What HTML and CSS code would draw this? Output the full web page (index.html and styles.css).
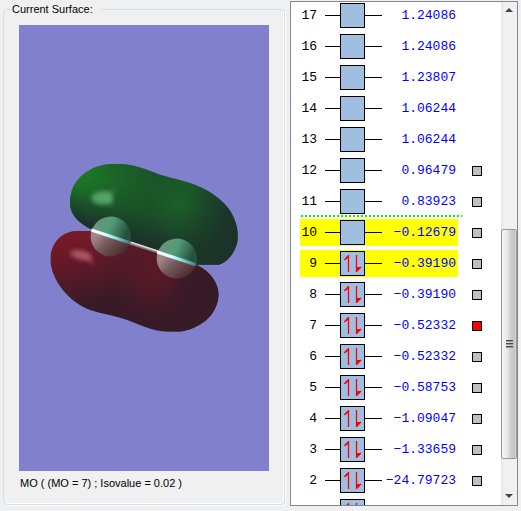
FILE: index.html
```html
<!DOCTYPE html>
<html lang="en">
<head>
<meta charset="utf-8">
<title>Molecular orbitals</title>
<link rel="stylesheet" href="styles.css">
</head>
<body>
<fieldset class="surface">
  <legend>Current Surface:</legend>
  <div class="canvas">
    <svg viewBox="19 25 250 446" role="img" aria-label="Orbital surface">
      <defs>
        <radialGradient id="green" gradientUnits="userSpaceOnUse" cx="115" cy="95" r="230">
          <stop offset="0" stop-color="#1a8026"/><stop offset=".5" stop-color="#1b6428"/><stop offset="1" stop-color="#1b5328"/>
        </radialGradient>
        <radialGradient id="greenMid" gradientUnits="userSpaceOnUse" cx="410" cy="165" r="130">
          <stop offset="0" stop-color="#1b6427" stop-opacity=".8"/><stop offset="1" stop-color="#1b5a28" stop-opacity="0"/>
        </radialGradient>
        <linearGradient id="greenShade" gradientUnits="userSpaceOnUse" x1="355" y1="140" x2="312" y2="275">
          <stop offset="0" stop-color="#1b3529" stop-opacity="0"/><stop offset=".4" stop-color="#1b3c29" stop-opacity=".25"/><stop offset="1" stop-color="#1b3229"/>
        </linearGradient>
        <linearGradient id="greenEdge" gradientUnits="userSpaceOnUse" x1="430" y1="180" x2="560" y2="225">
          <stop offset="0" stop-color="#1b3529" stop-opacity="0"/><stop offset="1" stop-color="#1b3329"/>
        </linearGradient>
        <linearGradient id="red" gradientUnits="userSpaceOnUse" x1="90" y1="250" x2="150" y2="470">
          <stop offset="0" stop-color="#7b1928"/><stop offset=".5" stop-color="#5a1927"/><stop offset="1" stop-color="#361a27"/>
        </linearGradient>
        <radialGradient id="redMid" gradientUnits="userSpaceOnUse" cx="345" cy="375" r="160">
          <stop offset="0" stop-color="#5c1827" stop-opacity=".9"/><stop offset=".4" stop-color="#541927" stop-opacity=".7"/><stop offset="1" stop-color="#421a27" stop-opacity="0"/>
        </radialGradient>
        <linearGradient id="redEdge" gradientUnits="userSpaceOnUse" x1="390" y1="390" x2="490" y2="430">
          <stop offset="0" stop-color="#361a27" stop-opacity="0"/><stop offset="1" stop-color="#361a27"/>
        </linearGradient>
        <linearGradient id="sphereTop" x1="0" y1="0" x2="1" y2=".3">
          <stop offset="0" stop-color="#779080"/><stop offset=".55" stop-color="#509c78"/><stop offset="1" stop-color="#24513b"/>
        </linearGradient>
        <linearGradient id="sphereLow" x1=".1" y1=".3" x2=".85" y2=".85">
          <stop offset="0" stop-color="#a08587"/><stop offset=".4" stop-color="#75585b"/><stop offset="1" stop-color="#4b2a2c"/>
        </linearGradient>
        <linearGradient id="bond" gradientUnits="userSpaceOnUse" x1="0" y1="0" x2="122" y2="0">
          <stop offset="0" stop-color="#fff"/><stop offset=".35" stop-color="#e0ffff"/><stop offset=".55" stop-color="#9eeeee"/><stop offset="1" stop-color="#447777"/>
        </linearGradient>
        <filter id="soft" x="-40%" y="-40%" width="180%" height="180%"><feGaussianBlur stdDeviation="7"/></filter>
        <path id="greenLobe" d="M90 160C90 105 120 72 165 52C190 42 210 41 235 41C270 41 310 53 345 68C375 80 400 84 430 93C485 108 535 135 565 175C590 210 594 240 593 265C592 300 565 335 537 344H470L157 240C115 220 91 195 90 160Z"/>
        <path id="redLobe" d="M155 243H105C60 247 31 285 31 328C33 390 85 455 150 480C180 490 210 494 240 503C290 518 340 545 380 545H420C480 535 530 500 536 435C536 405 515 365 470 345Z"/>
        <clipPath id="greenClip"><use href="#greenLobe"/></clipPath>
        <clipPath id="redClip"><use href="#redLobe"/></clipPath>
      </defs>
      <g transform="translate(40 150) scale(.33333)">
        <g clip-path="url(#greenClip)">
          <path fill="url(#green)" d="M80 30H600V360H80Z"/>
          <path fill="url(#greenMid)" d="M80 30H600V360H80Z"/>
          <path fill="url(#greenShade)" d="M80 30H600V360H80Z"/>
          <path fill="url(#greenEdge)" d="M80 30H600V360H80Z"/>
          <ellipse cx="187" cy="144" rx="33" ry="20" fill="#65b574" opacity=".75" filter="url(#soft)"/>
          <path d="M170 140L232 111L212 142L220 174Z" fill="#65b574" opacity=".3" filter="url(#soft)"/>
        </g>
        <g clip-path="url(#redClip)">
          <path fill="url(#red)" d="M20 230H550V560H20Z"/>
          <path fill="url(#redMid)" d="M180 230H550V560H180Z"/>
          <path fill="url(#redEdge)" d="M370 300H550V560H370Z"/>
          <ellipse cx="122" cy="315" rx="32" ry="14" transform="rotate(12 122 315)" fill="#c56875" opacity=".75" filter="url(#soft)"/>
          <path d="M120 318L155 314L162 348Z" fill="#c56875" opacity=".4" filter="url(#soft)"/>
        </g>
        <g id="atom">
          <path fill="url(#sphereTop)" d="M155 242A60 60 0 1 1 270 278Z"/>
          <path fill="url(#sphereLow)" d="M155 240A60 60 0 0 0 270 278Z"/>
        </g>
        <use href="#atom" x="198" y="66"/>
        <path d="M270 279L355 306" stroke="#817a7a" stroke-width="10"/>
        <path d="M272 277L355 304" stroke="#e0d8d8" stroke-width="5"/>
        <g id="stick"><path transform="translate(154 240) rotate(18.3)" d="M0-5H122V5H0Z" fill="url(#bond)"/></g>
        <use href="#stick" x="198" y="66"/>
      </g>
    </svg>
  </div>
  <p class="caption">MO ( (MO = 7) ; Isovalue = 0.02 )</p>
</fieldset>

<main class="orbitals">
  <div class="rows" id="rows"></div>
  <div class="scrollbar">
    <button class="arrow" type="button" aria-label="Scroll up"><svg viewBox="0 0 8 5"><path d="M4 0L8 4H0Z"/></svg></button>
    <div class="before"></div>
    <div class="thumb"><i></i><i></i><i></i></div>
    <div class="after"></div>
    <button class="arrow" type="button" aria-label="Scroll down"><svg viewBox="0 0 8 5"><path d="M0 0H8L4 4Z"/></svg></button>
  </div>
</main>
<script src="script.js"></script>
</body>
</html>
```
FILE: styles.css
```css
* { box-sizing: border-box; }

body {
  margin: 0;
  height: 100vh;
  padding: 1px 3px 5px;
  display: grid;
  grid-template-columns: 282fr 228fr;
  column-gap: 5px;
  background: #f0f0f0;
  color: #000;
  font: 11px/16px "Liberation Sans", Arial, sans-serif;
  overflow: hidden;
}

.surface {
  display: flex;
  flex-direction: column;
  min-width: 0;
  margin: 0 0 1px;
  padding: 8px 15px 13px;
  border: 1px solid #d5dfe5;
  border-radius: 4px;
  box-shadow: inset -1px -1px #fff, 1px 1px #fff;
}

.surface legend {
  margin-left: -8px;
  padding: 0 8px 0 1px;
  background: #f0f0f0;
}

.canvas {
  flex: 1;
  min-height: 0;
  background: #8080cc;
}

.canvas svg {
  display: block;
  width: 100%;
  height: 100%;
}

.caption { margin: 4px 1px 0; }

.orbitals {
  display: flex;
  min-width: 0;
  min-height: 0;
  border: 1px solid #828790;
  background: #fff;
  overflow: hidden;
}

.rows {
  flex: 1;
  min-width: 0;
  padding-left: 9px;
  display: flex;
  flex-direction: column;
  gap: 4px;
  overflow: hidden;
}

.row {
  flex: none;
  position: relative;
  display: flex;
  align-items: center;
  gap: 14px;
  height: 27px;
}

.level {
  display: grid;
  grid-template-columns: 17px 57px 1fr;
  column-gap: 8px;
  align-items: center;
  width: 158px;
  height: 27px;
  font: 13px/27px "Liberation Mono", "Courier New", monospace;
}

.level.marked { background: #ff0; }

.number { text-align: right; }

.diagram { display: block; width: 57px; height: 25px; }

.energy {
  display: flex;
  justify-content: flex-end;
  padding-right: 2px;
  min-width: 0;
  color: #00f;
  white-space: nowrap;
}

.row input {
  appearance: none;
  width: 10px;
  height: 10px;
  margin: 0;
  border: 1px solid #000;
  background: #c0c0c0;
}

.row input:checked { background: #f00; }

.row.gap-edge::before {
  content: "";
  position: absolute;
  left: 1px;
  top: -4px;
  width: 161px;
  height: 2px;
  background: repeating-linear-gradient(90deg, #0f0 0 2px, #fff 2px 4px);
}

.scrollbar {
  flex: none;
  width: 16px;
  display: flex;
  flex-direction: column;
  background: linear-gradient(90deg, #e5e5e5, #f0f0f0 3px);
}

.arrow {
  height: 17px;
  padding: 0;
  border: 0;
  background: none;
  display: grid;
  place-items: center;
}

.arrow svg { width: 8px; height: 5px; fill: #444; }

.before { flex: 211; }
.after { flex: 29; }

.thumb {
  flex: 229;
  display: flex;
  flex-direction: column;
  align-items: center;
  justify-content: center;
  gap: 1px;
  border: 1px solid #979797;
  border-radius: 2px;
  background: linear-gradient(90deg, #f5f5f5, #e8e8eb 40%, #d2d2d6 55%, #c2c2c7 90%, #e0e0e0);
}

.thumb i {
  width: 7px;
  height: 2px;
  border-top: 1px solid #444;
  background: #999;
}
```
FILE: script.js
```js
const levels = [
  [17, "1.24086"], [16, "1.24086"], [15, "1.23807"], [14, "1.06244"],
  [13, "1.06244"], [12, "0.96479"], [11, "0.83923"], [10, "−0.12679"],
  [9, "−0.39190"], [8, "−0.39190"], [7, "−0.52332"], [6, "−0.52332"],
  [5, "−0.58753"], [4, "−1.09047"], [3, "−1.33659"], [2, "−24.79723"]
];

const electrons =
  '<path d="M23.5 4V21M23.5 4.5L19.5 9M31.5 4V21M31.5 20.5L36 16" fill="none" stroke="red" stroke-width="1.3"/>' +
  '<path d="M23.5 4L19 8.5L22 8L23.5 6ZM31.5 21L36 16H31.5Z" fill="red"/>';

const diagram = filled => `
  <svg class="diagram" viewBox="0 0 57 25">
    <path d="M0 12.5H57" stroke="#000"/>
    <rect x="15.5" y=".5" width="24" height="24" fill="#a0bedf" stroke="#000"/>
    ${filled ? electrons : ""}
  </svg>`;

const rows = levels.map(([n, energy]) => `
  <div class="row${n === 10 ? " gap-edge" : ""}">
    <div class="level${n === 9 || n === 10 ? " marked" : ""}">
      <label class="number" for="mo${n}">${n}</label>
      ${diagram(n < 10)}
      <span class="energy">${energy}</span>
    </div>
    ${n <= 12 ? `<input type="checkbox" id="mo${n}"${n === 7 ? " checked" : ""}>` : ""}
  </div>`);

// The lowest level is only partly scrolled into view.
rows.push(`<div class="row"><div class="level"><span></span>${diagram(true)}</div></div>`);

document.getElementById("rows").innerHTML = rows.join("");
```
